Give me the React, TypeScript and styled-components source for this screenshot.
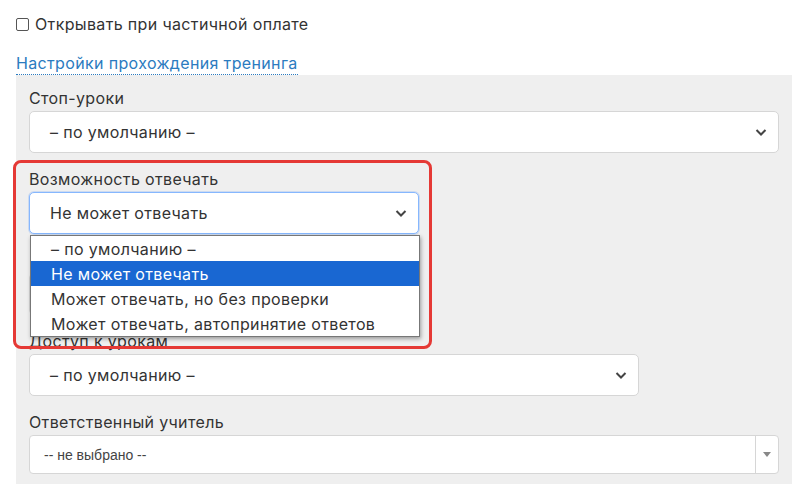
import React from "react";
import styled, { createGlobalStyle } from "styled-components";

const Global = createGlobalStyle`
  html, body { margin: 0; padding: 0; background: #fff; }
  body { font-family: Inter, "Noto Sans", sans-serif; color: #333; letter-spacing: 0.35px; }
`;

const Page = styled.div`
  padding: 13px 14px 0 16px;
  display: flex;
  flex-direction: column;
`;

const CheckRow = styled.label`
  display: flex;
  align-items: center;
  gap: 6px;
  font-size: 16px;
  height: 22px;
  color: #333;
`;

const Box = styled.span`
  width: 11px;
  height: 11px;
  border: 1px solid #555;
  border-radius: 2px;
  background: #fff;
`;

const Link = styled.a`
  margin-top: 17px;
  align-self: flex-start;
  font-size: 16px;
  color: #2b7bc0;
  line-height: 22px;
  border-bottom: 1px dotted #2b7bc0;
  text-decoration: none;
`;

const Panel = styled.div`
  background: #efefef;
  padding: 13px 13px 10px 13px;
  display: flex;
  flex-direction: column;
  gap: 16px;
`;

const Field = styled.div`
  display: flex;
  flex-direction: column;
  gap: 3px;
  position: relative;
`;

const Label = styled.div`
  font-size: 16px;
  line-height: 20px;
  min-height: 20px;
  color: #333;
`;

const Select = styled.div<{ $w?: number; $focus?: boolean }>`
  box-sizing: border-box;
  width: ${(p) => (p.$w ? `${p.$w}px` : "100%")};
  height: 42px;
  background: #fff;
  border: 1px solid ${(p) => (p.$focus ? "#86b7fe" : "#d6d6d6")};
  box-shadow: ${(p) => (p.$focus ? "0 0 0 1px rgba(13,110,253,0.15)" : "none")};
  border-radius: 5px;
  display: flex;
  align-items: center;
  justify-content: space-between;
  padding: 0 10px 0 20px;
  font-size: 16px;
  color: #333;
`;

const Select2 = styled.div`
  box-sizing: border-box;
  height: 39px;
  background: #fff;
  border: 1px solid #d6d6d6;
  border-radius: 4px;
  display: flex;
  align-items: stretch;
  font-family: "Liberation Sans", Arial, sans-serif;
  letter-spacing: 0;
  font-size: 14px;
  color: #444;
`;

const S2Text = styled.div`
  flex: 1;
  display: flex;
  align-items: center;
  padding-left: 14px;
`;

const S2Arrow = styled.div`
  width: 22px;
  border-left: 1px solid #d6d6d6;
  display: flex;
  align-items: center;
  justify-content: center;
  &::after {
    content: "";
    border-left: 4px solid transparent;
    border-right: 4px solid transparent;
    border-top: 5px solid #888;
  }
`;

const Highlight = styled.div`
  position: absolute;
  left: -16px;
  top: -9px;
  width: 419px;
  height: 189px;
  box-sizing: border-box;
  border: 3px solid #e53935;
  border-radius: 8px;
  pointer-events: none;
  z-index: 3;
`;

const Menu = styled.div`
  position: absolute;
  left: 1px;
  top: 66px;
  width: 390px;
  box-sizing: border-box;
  background: #fff;
  border: 1px solid #777;
  box-shadow: 1px 2px 4px rgba(0, 0, 0, 0.35);
  z-index: 2;
`;

const Option = styled.div<{ $active?: boolean }>`
  height: 25px;
  display: flex;
  align-items: center;
  padding-left: 20px;
  font-size: 16px;
  background: ${(p) => (p.$active ? "#1967d2" : "#fff")};
  color: ${(p) => (p.$active ? "#fff" : "#333")};
`;

const Chevron = () => (
  <svg width="14" height="14" viewBox="0 0 14 14">
    <path d="M2.5 5 L7 9.5 L11.5 5" fill="none" stroke="#444" strokeWidth="2" />
  </svg>
);

export default function App() {
  return (
    <>
      <Global />
      <Page>
        <CheckRow>
          <Box />
          Открывать при частичной оплате
        </CheckRow>
        <Link>Настройки прохождения тренинга</Link>
        <Panel>
          <Field>
            <Label>Стоп-уроки</Label>
            <Select>
              – по умолчанию –
              <Chevron />
            </Select>
          </Field>
          <Field>
            <Highlight />
            <Label>Возможность отвечать</Label>
            <Select $w={390} $focus>
              Не может отвечать
              <Chevron />
            </Select>
            <Menu>
              <Option>– по умолчанию –</Option>
              <Option $active>Не может отвечать</Option>
              <Option>Может отвечать, но без проверки</Option>
              <Option>Может отвечать, автопринятие ответов</Option>
            </Menu>
          </Field>
          <Field>
            <Label />
            <Select $w={390} />
          </Field>
          <Field>
            <Label>Доступ к урокам</Label>
            <Select $w={610}>
              – по умолчанию –
              <Chevron />
            </Select>
          </Field>
          <Field>
            <Label>Ответственный учитель</Label>
            <Select2>
              <S2Text>-- не выбрано --</S2Text>
              <S2Arrow />
            </Select2>
          </Field>
        </Panel>
      </Page>
    </>
  );
}
